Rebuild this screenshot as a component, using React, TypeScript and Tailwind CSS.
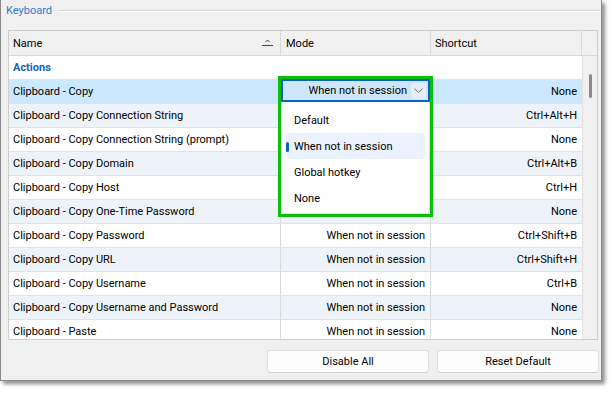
import React from 'react';

type Row = { name: string; mode: string; shortcut: string };

// rows 0-5 sit under the open dropdown, so their mode text is hidden
const rows: Row[] = [
  { name: 'Clipboard - Copy', mode: '', shortcut: 'None' },
  { name: 'Clipboard - Copy Connection String', mode: '', shortcut: 'Ctrl+Alt+H' },
  { name: 'Clipboard - Copy Connection String (prompt)', mode: '', shortcut: 'None' },
  { name: 'Clipboard - Copy Domain', mode: '', shortcut: 'Ctrl+Alt+B' },
  { name: 'Clipboard - Copy Host', mode: '', shortcut: 'Ctrl+H' },
  { name: 'Clipboard - Copy One-Time Password', mode: '', shortcut: 'None' },
  { name: 'Clipboard - Copy Password', mode: 'When not in session', shortcut: 'Ctrl+Shift+B' },
  { name: 'Clipboard - Copy URL', mode: 'When not in session', shortcut: 'Ctrl+Shift+H' },
  { name: 'Clipboard - Copy Username', mode: 'When not in session', shortcut: 'Ctrl+B' },
  { name: 'Clipboard - Copy Username and Password', mode: 'When not in session', shortcut: 'None' },
  { name: 'Clipboard - Paste', mode: 'When not in session', shortcut: 'None' },
];

const modes = ['Default', 'When not in session', 'Global hotkey', 'None'];

const SortIcon = () => (
  <svg width="11" height="7" viewBox="0 0 11 7" className="mr-[7px]">
    <path d="M3.5 1.5 L5.5 0.5 L7.5 1.5" stroke="#444" strokeWidth="1" fill="none" />
    <line x1="0" y1="5.5" x2="11" y2="5.5" stroke="#444" strokeWidth="1" />
  </svg>
);

const ModeDropdown = () => (
  <div className="absolute left-[278px] top-[76px] w-[155px] h-[141px] border-[3px] border-[#0cbf0c] flex flex-col">
    <div className="h-[23px] border-2 border-[#0a63c0] bg-[#cfe6fa] flex items-center justify-end pr-[2px]">
      <span>When not in session</span>
      <span className="ml-[4px] w-[15px] h-[16px] bg-[#e4edf6] rounded-[2px] flex items-center justify-center">
        <svg width="9" height="5" viewBox="0 0 9 5">
          <path d="M0.5 0.5 L4.5 4.5 L8.5 0.5" stroke="#777" strokeWidth="1" fill="none" />
        </svg>
      </span>
    </div>
    <div className="flex-1 bg-white border border-t-0 border-[#dcdcdc] rounded-b-[4px] pt-[5px] px-[4px]">
      {modes.map((m) => {
        const active = m === 'When not in session';
        return (
          <div
            key={m}
            className={`relative h-[26px] flex items-center pl-[8px] rounded-[4px] ${active ? 'bg-[#eaf3fd]' : ''}`}
          >
            {active && <span className="absolute left-0 top-[9px] w-[3px] h-[10px] rounded-full bg-[#0a63c0]" />}
            {m}
          </div>
        );
      })}
    </div>
  </div>
);

export default function App() {
  return (
    <div
      className="relative w-[614px] h-[394px] bg-white text-[11px] text-black leading-none"
      style={{ fontFamily: 'Roboto, "Noto Sans", sans-serif' }}
    >
      <div className="w-[602px] h-[381px] bg-[#f0f0f0] border-x border-b border-[#8a8a8a] shadow-[3px_3px_4px_rgba(0,0,0,0.45)] flex flex-col">
        <div className="h-[20px] flex items-center">
          <span className="pl-[5px] text-[#2f7bd0]">Keyboard</span>
          <div className="flex-1 ml-[6px] mt-[2px] border-t border-[#d6d6d6] border-b border-b-white" />
        </div>

        <div className="mt-[10px] ml-[7px] w-[590px] h-[310px] border border-[#cfcfcf] bg-white flex flex-col overflow-hidden">
          <div className="h-[25px] shrink-0 flex bg-[#f0f0f0] border-b border-[#d8d8d8]">
            <div className="w-[272px] border-r border-[#d8d8d8] flex items-center justify-between pl-[4px]">
              <span>Name</span>
              <SortIcon />
            </div>
            <div className="w-[150px] border-r border-[#d8d8d8] flex items-center pl-[5px]">Mode</div>
            <div className="w-[151px] border-r border-[#d8d8d8] flex items-center pl-[4px]">Shortcut</div>
            <div className="w-[15px]" />
          </div>

          <div className="flex flex-1 min-h-0">
            <div className="w-[573px] flex flex-col">
              <div className="h-[24px] shrink-0 flex items-center pl-[4px] border-b border-[#e4e4e4] font-bold text-[#1c63b4]">
                Actions
              </div>
              {rows.map((r, i) => {
                const bg = i === 0 ? 'bg-[#cce8ff]' : i % 2 === 1 ? 'bg-[#eef3fa]' : 'bg-white';
                return (
                  <div key={r.name} className={`h-[24px] shrink-0 flex border-b border-[#e2e2e2] ${bg}`}>
                    <div className="w-[272px] border-r border-[#dadada] flex items-center pl-[4px]">{r.name}</div>
                    <div className="w-[150px] border-r border-[#dadada] flex items-center justify-end pr-[5px]">{r.mode}</div>
                    <div className="w-[151px] flex items-center justify-end pr-[5px]">{r.shortcut}</div>
                  </div>
                );
              })}
            </div>
            <div className="w-[15px] bg-[#f0f0f0] border-l border-[#e2e2e2] flex justify-center pt-[18px]">
              <div className="w-[3px] h-[24px] rounded-full bg-[#8a8a8a]" />
            </div>
          </div>
        </div>

        <div className="mt-[10px] flex justify-end gap-[8px] pr-[2px]">
          <button className="w-[162px] h-[23px] bg-[#fdfdfd] border border-[#dedede] border-b-[#cfcfcf] rounded-[4px]">
            Disable All
          </button>
          <button className="w-[162px] h-[23px] bg-[#fdfdfd] border border-[#dedede] border-b-[#cfcfcf] rounded-[4px]">
            Reset Default
          </button>
        </div>
      </div>

      <ModeDropdown />
    </div>
  );
}
